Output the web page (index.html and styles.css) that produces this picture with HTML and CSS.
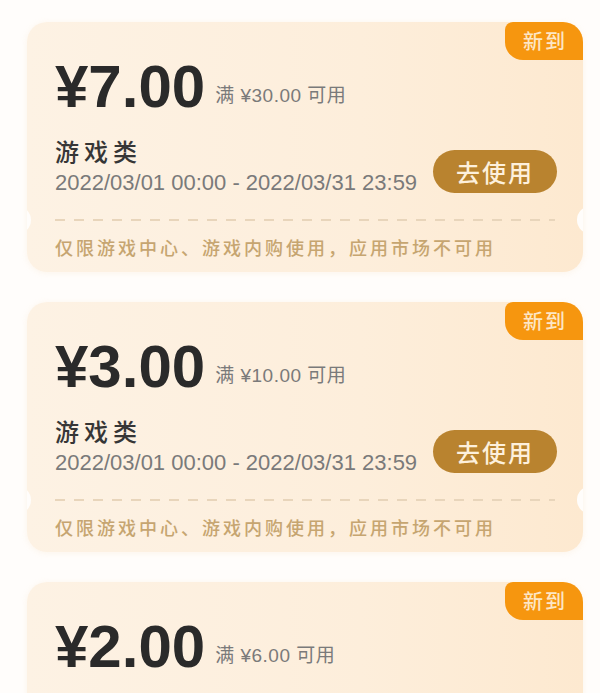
FILE: index.html
```html
<!DOCTYPE html>
<html lang="zh-CN">
<head>
    <meta charset="UTF-8">
    <meta name="viewport" content="width=device-width, initial-scale=1.0">
    <title>优惠券</title>
    <link rel="stylesheet" href="styles.css">
</head>
<body>

    <div class="lista-cupones">
        <!-- Cupón 1 -->
        <div class="cupon">
            <span class="etiqueta">新到</span>
            <div class="cupon-principal">
                <div class="fila-precio">
                    <span class="precio">¥7.00</span>
                    <span class="condicion">满 ¥30.00 可用</span>
                </div>
                <div class="fila-detalle">
                    <div class="info">
                        <div class="categoria">游戏类</div>
                        <div class="fecha">2022/03/01 00:00 - 2022/03/31 23:59</div>
                    </div>
                    <button class="btn-usar">去使用</button>
                </div>
            </div>
            <div class="separador"></div>
            <div class="cupon-pie">仅限游戏中心、游戏内购使用，应用市场不可用</div>
        </div>

        <!-- Cupón 2 -->
        <div class="cupon">
            <span class="etiqueta">新到</span>
            <div class="cupon-principal">
                <div class="fila-precio">
                    <span class="precio">¥3.00</span>
                    <span class="condicion">满 ¥10.00 可用</span>
                </div>
                <div class="fila-detalle">
                    <div class="info">
                        <div class="categoria">游戏类</div>
                        <div class="fecha">2022/03/01 00:00 - 2022/03/31 23:59</div>
                    </div>
                    <button class="btn-usar">去使用</button>
                </div>
            </div>
            <div class="separador"></div>
            <div class="cupon-pie">仅限游戏中心、游戏内购使用，应用市场不可用</div>
        </div>

        <!-- Cupón 3 -->
        <div class="cupon">
            <span class="etiqueta">新到</span>
            <div class="cupon-principal">
                <div class="fila-precio">
                    <span class="precio">¥2.00</span>
                    <span class="condicion">满 ¥6.00 可用</span>
                </div>
                <div class="fila-detalle">
                    <div class="info">
                        <div class="categoria">游戏类</div>
                        <div class="fecha">2022/03/01 00:00 - 2022/03/31 23:59</div>
                    </div>
                    <button class="btn-usar">去使用</button>
                </div>
            </div>
            <div class="separador"></div>
            <div class="cupon-pie">仅限游戏中心、游戏内购使用，应用市场不可用</div>
        </div>
    </div>

</body>
</html>
```

FILE: styles.css
```css
body {
    margin: 0;
    background-color: #fffdfb;
    font-family: "Liberation Sans", "Noto Sans CJK SC", sans-serif;
}
.lista-cupones {
    padding: 22px 17px 0 27px;
}
.cupon {
    position: relative;
    height: 250px;
    margin-bottom: 30px;
    border-radius: 20px;
    overflow: hidden;
    background: linear-gradient(to right, #fdf2e4 0%, #fdeedb 60%, #fde9d0 100%);
    box-shadow: 0 1px 6px rgba(240, 205, 160, 0.18);
}
.etiqueta {
    position: absolute;
    top: 0;
    right: 0;
    width: 78px;
    height: 38px;
    line-height: 38px;
    text-align: center;
    background-color: #f6960f;
    color: #fde6c6;
    font-family: "Noto Sans CJK SC", sans-serif;
    font-weight: 500;
    font-size: 20px;
    letter-spacing: 2px;
    text-indent: 2px;
    border-radius: 8px 0 0 18px;
}
.cupon-principal {
    padding: 35px 26px 24px 28px;
}
.fila-precio {
    display: flex;
    align-items: flex-end;
    gap: 10px;
}
.precio {
    font-size: 60px;
    line-height: 60px;
    font-weight: bold;
    color: #2a2a2a;
}
.condicion {
    font-size: 19px;
    line-height: 20px;
    letter-spacing: 0.5px;
    color: #7a7a7a;
    margin-bottom: 11px;
}
.fila-detalle {
    display: flex;
    justify-content: space-between;
    align-items: flex-end;
    margin-top: 19px;
}
.categoria {
    font-family: "Noto Sans CJK SC", sans-serif;
    font-weight: 500;
    font-size: 24px;
    line-height: 30px;
    letter-spacing: 5px;
    color: #363636;
}
.fecha {
    margin-top: 5px;
    font-size: 22px;
    line-height: 24px;
    color: #7a7a7a;
}
.btn-usar {
    width: 124px;
    height: 43px;
    margin-bottom: 2px;
    border: none;
    border-radius: 22px;
    background-color: #b9832f;
    color: #fdf0dc;
    font-family: "Noto Sans CJK SC", sans-serif;
    font-weight: 500;
    font-size: 24px;
    letter-spacing: 2px;
    padding: 0;
}
.separador {
    position: relative;
    height: 2px;
    margin: 0 28px;
    background-image: repeating-linear-gradient(to right, #e8d5bb 0 10px, transparent 10px 19px);
}
/* muescas laterales del cupón */
.separador::before,
.separador::after {
    content: "";
    position: absolute;
    top: -13px;
    width: 28px;
    height: 28px;
    border-radius: 50%;
    background-color: #fffdfb;
}
.separador::before {
    left: -52px;
}
.separador::after {
    right: -50px;
}
.cupon-pie {
    padding: 14px 28px 0;
    font-family: "Noto Sans CJK SC", sans-serif;
    font-weight: 500;
    font-size: 18px;
    line-height: 24px;
    letter-spacing: 3px;
    color: #c6a570;
}
```
